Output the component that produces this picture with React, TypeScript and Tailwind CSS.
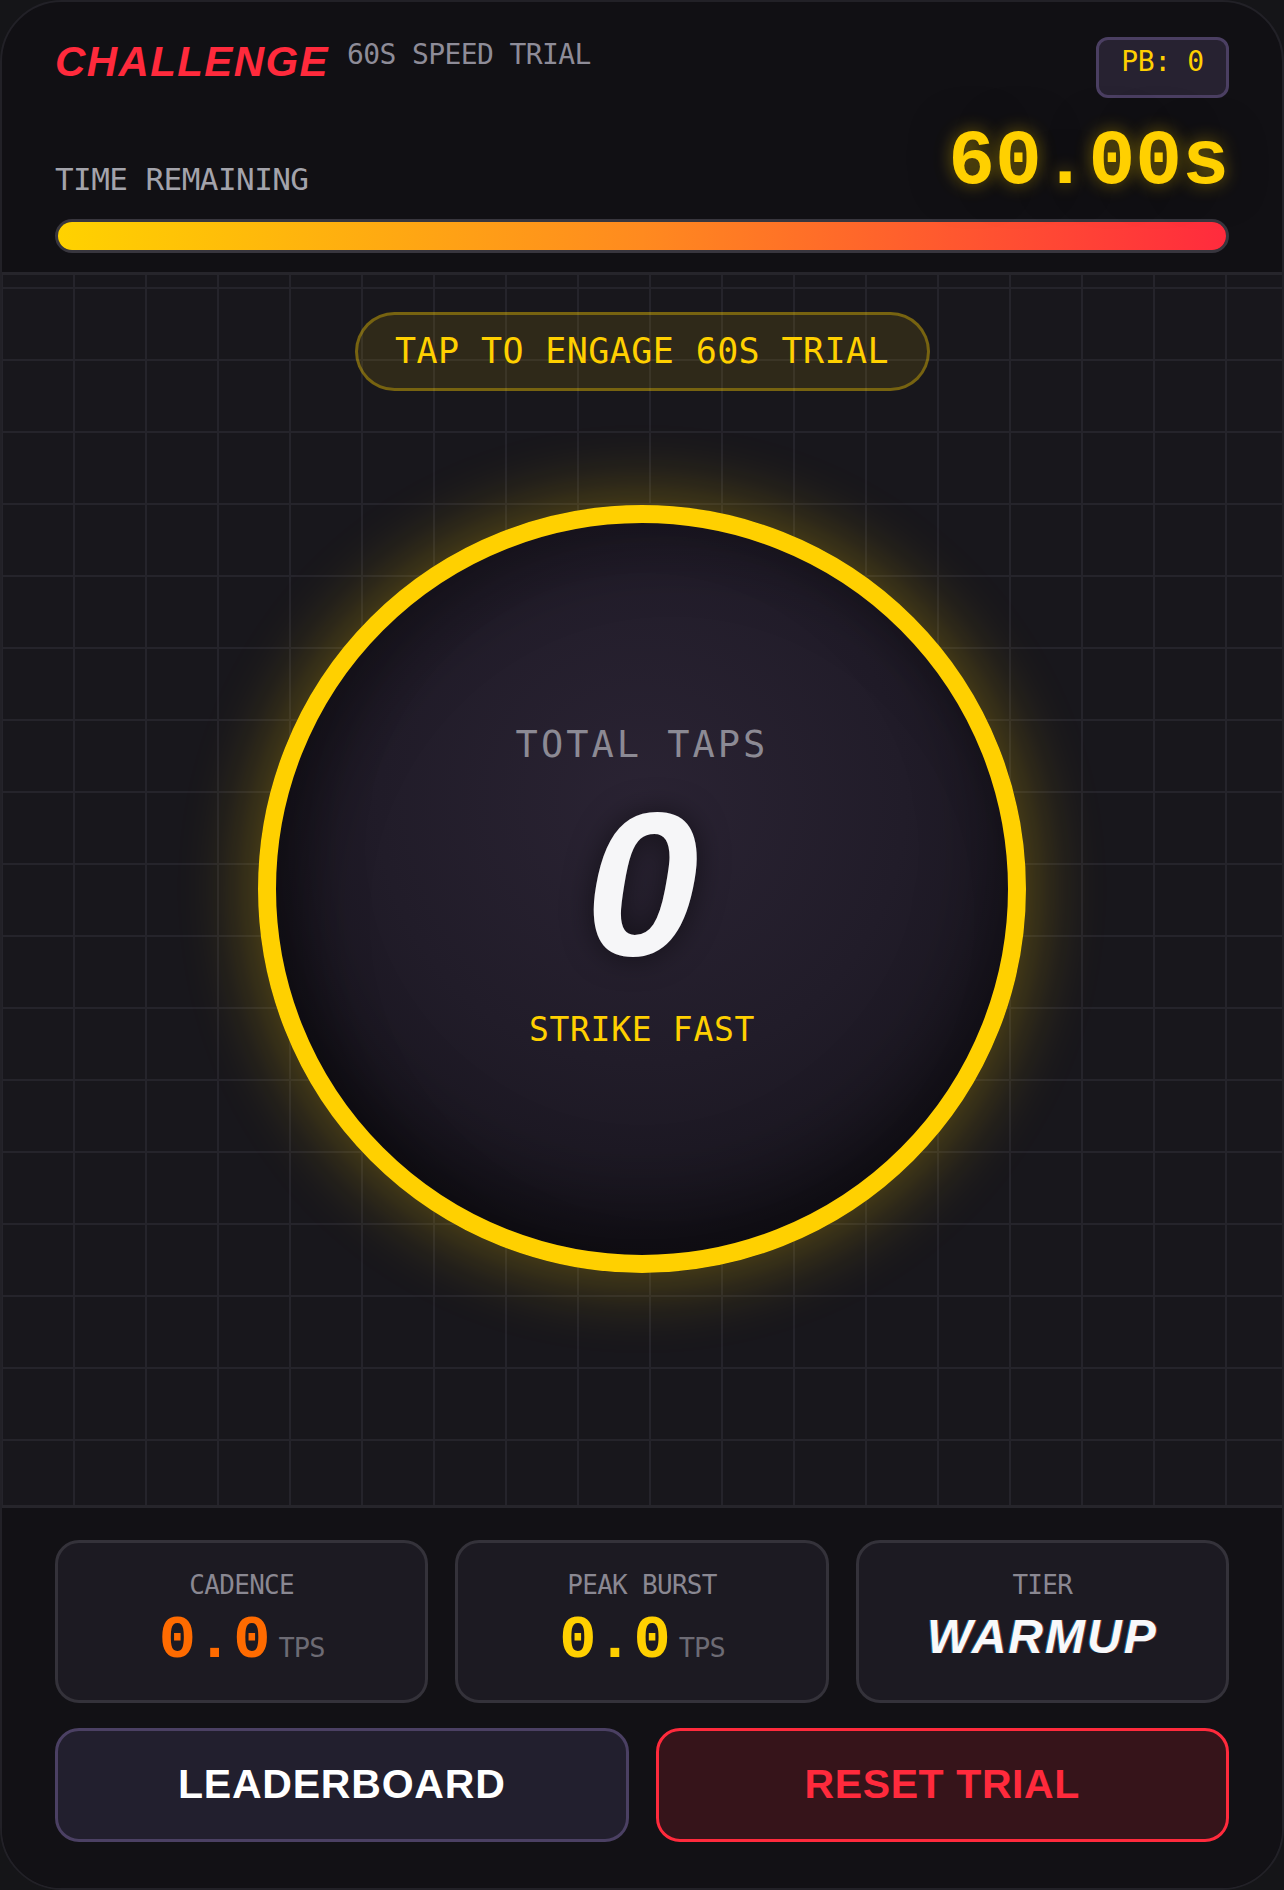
const mono = "font-['DejaVu_Sans_Mono',monospace]";
const courier = "font-['Liberation_Mono','Courier_New',monospace]";
const sans = "font-['Liberation_Sans',Arial,sans-serif]";

type Stat = { label: string; value: string; tone: string };

const stats: Stat[] = [
  { label: "CADENCE", value: "0.0", tone: "text-[#ff6b00]" },
  { label: "PEAK BURST", value: "0.0", tone: "text-[#ffd000]" },
];

function StatCard({ label, value, tone }: Stat) {
  return (
    <div className="flex h-[163px] flex-col items-center justify-center gap-[12px] rounded-[24px] border-[3px] border-[#34323a] bg-[#1c1a22]">
      <div className={`${mono} text-[26px] leading-none tracking-[-0.7px] text-[#8a8892]`}>{label}</div>
      <div className="flex h-[62px] items-baseline">
        <span className={`${courier} text-[62px] font-bold leading-none ${tone}`}>{value}</span>
        <span className={`${mono} ml-2 text-[27px] leading-none tracking-[-0.9px] text-[#6d6b74]`}>TPS</span>
      </div>
    </div>
  );
}

export default function App() {
  return (
    <div className="min-h-screen bg-[#151518]">
      <div className="flex min-h-screen flex-col overflow-hidden rounded-[62px] border-2 border-[#222127] bg-[#111014]">
        {/* header */}
        <header className="border-b-[3px] border-[#26252b] px-[53px] pb-[19px] pt-[35px]">
          <div className="flex items-start justify-between">
            <div className="flex items-start gap-[18px] pt-[4px]">
              <h1 className={`${sans} text-[42px] font-bold italic leading-none tracking-[1.4px] text-[#ff2a3c]`}>
                CHALLENGE
              </h1>
              <span className={`${mono} text-[28px] leading-none tracking-[-0.6px] text-[#8e8c98]`}>
                60S SPEED TRIAL
              </span>
            </div>
            <div className="box-border flex h-[61px] w-[133px] justify-center rounded-[12px] border-[3px] border-[#4b3f62] bg-[#272231] pt-[8px]">
              <span className={`${mono} text-[28px] leading-none tracking-[-0.4px] text-[#ffd000]`}>PB: 0</span>
            </div>
          </div>

          <div className="mt-[25px] flex items-end justify-between">
            <span className={`${mono} mb-[6px] text-[31px] leading-none tracking-[-0.56px] text-[#a3a3ab]`}>
              TIME REMAINING
            </span>
            <span
              className={`${courier} text-[78px] font-bold leading-none text-[#ffd000] [text-shadow:0_0_18px_rgba(255,208,0,0.45),0_0_40px_rgba(0,0,0,0.6)]`}
            >
              60.00s
            </span>
          </div>

          <div className="mt-[18px] h-[34px] rounded-full border-[3px] border-[#38363e] bg-[#1b1a1f]">
            <div className="h-full w-full rounded-full bg-[linear-gradient(90deg,#ffd200_0%,#ff8a1f_50%,#ff2b3d_100%)]" />
          </div>
        </header>

        {/* tap arena */}
        <section className="flex flex-1 flex-col items-center border-b-[3px] border-[#26252b] bg-[#18171c] bg-[linear-gradient(to_right,#25242b_2px,transparent_2px),linear-gradient(to_bottom,#25242b_2px,transparent_2px)] bg-[size:72px_72px] bg-[position:-1px_12px] pt-[37px]">
          <div className="flex h-[79px] w-[575px] items-center justify-center rounded-full border-[3px] border-[#ffd000]/35 bg-[#ffd000]/10">
            <span className={`${mono} text-[35px] leading-none tracking-[0.4px] text-[#ffd000]`}>
              TAP TO ENGAGE 60S TRIAL
            </span>
          </div>

          <button className="mt-[114px] flex h-[768px] w-[768px] flex-col items-center justify-center rounded-full border-[18px] border-[#ffd000] bg-[radial-gradient(circle_at_50%_38%,#2a2333_0%,#211c29_45%,#131117_100%)] pb-[6px] shadow-[0_0_70px_8px_rgba(255,208,0,0.3),inset_0_-40px_80px_rgba(0,0,0,0.45),inset_30px_30px_60px_rgba(0,0,0,0.25)]">
            <span className={`${mono} text-[37px] leading-none tracking-[3px] text-[#8c8a94]`}>TOTAL TAPS</span>
            <span
              className={`${sans} mt-[19px] text-[204px] font-bold italic leading-none text-[#f6f6f8] [text-shadow:0_0_30px_rgba(0,0,0,0.5)]`}
            >
              0
            </span>
            <span className={`${mono} mt-[27px] text-[33px] leading-none tracking-[0.7px] text-[#ffd000]`}>
              STRIKE FAST
            </span>
          </button>
        </section>

        {/* stats + actions */}
        <footer className="bg-[#121115] px-[53px] pb-[46px] pt-[32px]">
          <div className="grid grid-cols-3 gap-[27px]">
            {stats.map((s) => (
              <StatCard key={s.label} {...s} />
            ))}
            <div className="flex h-[163px] flex-col items-center justify-center gap-[12px] rounded-[24px] border-[3px] border-[#34323a] bg-[#1c1a22]">
              <div className={`${mono} text-[26px] leading-none tracking-[-0.7px] text-[#8a8892]`}>TIER</div>
              <div className="flex h-[62px] items-center">
                <span
                  className={`${sans} mb-[7px] text-[48px] font-bold italic leading-none tracking-[2px] text-[#f8f8fa] [text-shadow:-1px_0_rgba(0,190,255,0.45),1px_0_rgba(255,90,60,0.45)]`}
                >
                  WARMUP
                </span>
              </div>
            </div>
          </div>

          <div className="mt-[25px] grid grid-cols-2 gap-[27px]">
            <button
              className={`${sans} h-[114px] rounded-[24px] border-[3px] border-[#4b4063] bg-[#221f2e] text-[41px] font-bold tracking-[0.8px] text-white`}
            >
              LEADERBOARD
            </button>
            <button
              className={`${sans} h-[114px] rounded-[24px] border-[3px] border-[#ff2a3c] bg-[#36141a] text-[41px] font-bold tracking-[0.6px] text-[#ff2a3c]`}
            >
              RESET TRIAL
            </button>
          </div>
        </footer>
      </div>
    </div>
  );
}
